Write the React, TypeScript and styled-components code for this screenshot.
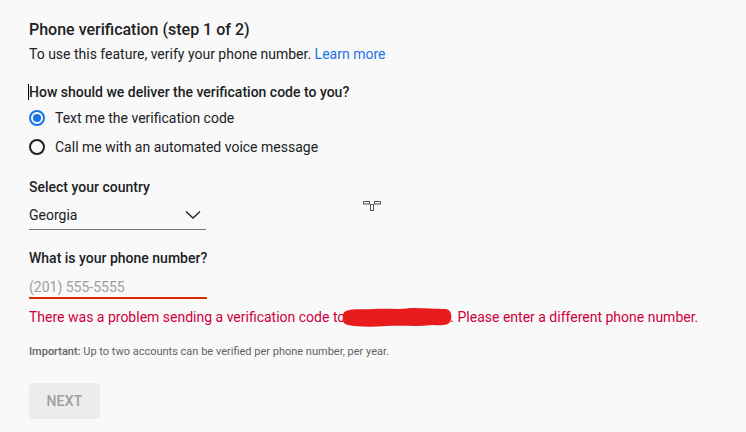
import React from 'react';
import styled, {createGlobalStyle} from 'styled-components';

const GlobalStyle = createGlobalStyle`
  html, body {
    margin: 0;
    padding: 0;
    background: #f9f9f9;
  }
  body {
    font-family: Roboto, "Liberation Sans", Arial, sans-serif;
    color: #202124;
  }
`;

const Page = styled.div`
  position: relative;
  width: 746px;
  height: 432px;
  box-sizing: border-box;
  padding: 18px 0 0 29px;
  display: flex;
  flex-direction: column;
  align-items: flex-start;
  overflow: hidden;
`;

const Title = styled.h1`
  margin: 0;
  font-size: 16px;
  line-height: 24px;
  font-weight: 500;
  color: #202124;
`;

const Intro = styled.p`
  margin: 2px 0 0;
  font-size: 14px;
  line-height: 20px;
  color: #202124;
`;

const Link = styled.a`
  color: #1a73e8;
  text-decoration: none;
`;

const Label = styled.div<{$gap: number}>`
  position: relative;
  margin-top: ${p => p.$gap}px;
  font-size: 14px;
  line-height: 20px;
  font-weight: 500;
  color: #202124;
`;

const Caret = styled.span`
  position: absolute;
  left: -1px;
  top: 2px;
  width: 1px;
  height: 16px;
  background: #000;
`;

const RadioList = styled.div`
  margin-top: 1px;
  display: flex;
  flex-direction: column;
`;

const RadioRow = styled.label`
  display: flex;
  align-items: center;
  height: 29px;
  gap: 10px;
  font-size: 14px;
  color: #202124;
`;

const RadioMark = styled.span<{$checked: boolean}>`
  box-sizing: border-box;
  width: 16px;
  height: 16px;
  border-radius: 50%;
  border: 2px solid ${p => (p.$checked ? '#1a73e8' : '#202124')};
  display: flex;
  align-items: center;
  justify-content: center;
  &::after {
    content: '';
    width: 8px;
    height: 8px;
    border-radius: 50%;
    background: ${p => (p.$checked ? '#1a73e8' : 'transparent')};
  }
`;

const Select = styled.div`
  margin-top: 3px;
  box-sizing: border-box;
  width: 177px;
  height: 30px;
  display: flex;
  align-items: center;
  justify-content: space-between;
  padding: 0 5px 0 0;
  border-bottom: 1px solid #757575;
  font-size: 14px;
  color: #202124;
`;

const Input = styled.div`
  margin-top: 4px;
  box-sizing: border-box;
  width: 178px;
  padding-top: 5px;
  line-height: 20px;
  border-bottom: 2px solid #dd2c00;
  font-size: 14px;
  color: #9e9e9e;
`;

const ErrorText = styled.div`
  margin-top: 8px;
  height: 20px;
  font-size: 14px;
  line-height: 20px;
  color: #d0003c;
  white-space: nowrap;
  display: flex;
  align-items: center;
`;

const Redacted = styled.svg`
  flex: none;
  display: block;
  width: 110px;
  height: 19px;
  margin: 1px -2px 0 -3px;
`;

const Note = styled.p`
  margin: 17px 0 0;
  font-size: 11px;
  line-height: 16px;
  color: #5f6368;
  b {
    font-weight: 500;
  }
`;

const NextButton = styled.button`
  margin-top: 23px;
  width: 71px;
  height: 36px;
  border: none;
  border-radius: 3px;
  background: #ececec;
  color: #9e9e9e;
  font-family: inherit;
  font-size: 14px;
  font-weight: 500;
  letter-spacing: 0.2px;
`;

const Pointer = styled.svg`
  position: absolute;
  left: 362px;
  top: 200px;
`;

const Chevron = () => (
  <svg width="16" height="10" viewBox="0 0 16 10">
    <path d="M1 1.5 L8 8 L15 1.5" fill="none" stroke="#202124" strokeWidth="1.3" />
  </svg>
);

export default function App() {
  return (
    <Page>
      <GlobalStyle />
      <Title>Phone verification (step 1 of 2)</Title>
      <Intro>
        To use this feature, verify your phone number. <Link href="#">Learn more</Link>
      </Intro>

      <Label $gap={18}>
        <Caret />
        How should we deliver the verification code to you?
      </Label>
      <RadioList>
        <RadioRow>
          <RadioMark $checked />
          Text me the verification code
        </RadioRow>
        <RadioRow>
          <RadioMark $checked={false} />
          Call me with an automated voice message
        </RadioRow>
      </RadioList>

      <Label $gap={16}>Select your country</Label>
      <Select>
        <span>Georgia</span>
        <Chevron />
      </Select>

      <Label $gap={18}>What is your phone number?</Label>
      <Input>(201) 555-5555</Input>

      <ErrorText>
        There was a problem sending a verification code to
        <Redacted viewBox="0 0 110 19" preserveAspectRatio="none">
          <path
            d="M4 3 C12 0 22 2 32 1 C45 0 55 2 68 0 C82 0 96 1 104 1 C109 2 110 7 109 12 C108 17 100 18 90 17 C75 19 60 17 45 18 C30 19 15 19 6 17 C1 16 0 12 1 8 C1 5 2 4 4 3 Z"
            fill="#e81c1c"
          />
        </Redacted>
        . Please enter a different phone number.
      </ErrorText>

      <Note>
        <b>Important:</b> Up to two accounts can be verified per phone number, per year.
      </Note>

      <NextButton>NEXT</NextButton>

      <Pointer width="20" height="12" viewBox="0 0 20 12">
        <rect x="1.5" y="1.5" width="6" height="2.5" fill="#fff" stroke="#555" strokeWidth="1" />
        <rect x="12.5" y="1.5" width="6" height="2.5" fill="#fff" stroke="#555" strokeWidth="1" />
        <rect x="8.5" y="4.5" width="3" height="6" fill="#fff" stroke="#555" strokeWidth="1" />
      </Pointer>
    </Page>
  );
}
